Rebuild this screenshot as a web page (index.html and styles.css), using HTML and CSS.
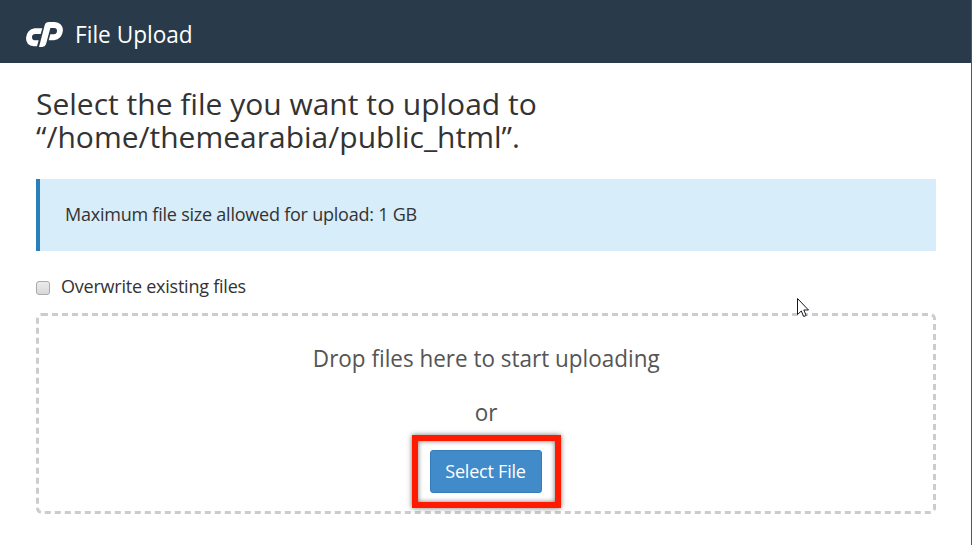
FILE: index.html
```html
<!DOCTYPE html>
<html lang="en">
<head>
<meta charset="utf-8">
<title>File Upload</title>
<link rel="stylesheet" href="styles.css">
</head>
<body>
<header class="topbar">
  <svg class="logo" viewBox="0 0 111 75" aria-hidden="true">
    <path d="M26 19H49L44 36H27Q18 37 18 45Q18 54 25 55H38L33 73H23Q0 71 0 48Q3 22 26 19Z"/>
    <path d="M39 75L56 10Q59 0 69 0H86Q110 2 111 25Q108 53 84 55H68L73 37H84Q93 36 93 27Q93 18 85 18H73L60 67Q57 75 49 75Z"/>
  </svg>
  <span class="brand">File Upload</span>
</header>
<main class="content">
  <h1 class="title">Select the file you want to upload to<br>“/home/themearabia/public_html”.</h1>
  <div class="callout">Maximum file size allowed for upload: 1 GB</div>
  <label class="option"><input class="check" type="checkbox"><span>Overwrite existing files</span></label>
  <section class="dropzone">
    <svg class="outline" viewBox="0 0 900 201" aria-hidden="true"><rect x="1.5" y="1.5" width="897" height="198" rx="4.5"/></svg>
    <p class="hint">Drop files here to start uploading</p>
    <p class="or">or</p>
    <div class="highlight"><button class="select" type="button">Select File</button></div>
  </section>
</main>
<svg class="cursor" viewBox="0 0 13 20" aria-hidden="true"><path d="M.5 .5V16.5L4.3 13L6.7 18.5L9.2 17.5L6.8 12H11.5Z"/></svg>
</body>
</html>
```
FILE: styles.css
```css
* { box-sizing: border-box; }
body {
  margin: 0;
  height: 545px;
  overflow: hidden;
  background: #fff;
  border-right: 1px solid #555;
  color: #333;
  font-family: "Open Sans", sans-serif;
}
.topbar {
  display: flex;
  align-items: center;
  height: 63px;
  padding: 6px 26px 0;
  background: #293a4a;
  color: #fff;
}
.logo { width: 37px; height: 25px; fill: #fff; }
.brand {
  margin: 0 0 2px 12px;
  font-size: 24px;
  line-height: 32px;
  transform: scaleX(.942);
  transform-origin: left;
}
.content { padding: 24px 35px 0 36px; }
.title { margin: 0; font-size: 30px; font-weight: 400; line-height: 33px; }
.callout {
  height: 72px;
  margin-top: 26px;
  padding-left: 25px;
  border-left: 4px solid #2980b9;
  background: #d7edf9;
  font-size: 18px;
  letter-spacing: -.23px;
  line-height: 71px;
}
.option { display: flex; align-items: center; height: 26px; margin-top: 22px; font-size: 18px; letter-spacing: -.23px; }
.check {
  appearance: none;
  width: 14px;
  height: 14px;
  margin: 4px 11px 0 0;
  border: 1px solid #aaa;
  border-radius: 3px;
  background: linear-gradient(#ececec, #d8d8d8);
}
.dropzone {
  position: relative;
  display: flex;
  flex-direction: column;
  align-items: center;
  height: 201px;
  margin-top: 14px;
  color: #555;
}
.outline { position: absolute; inset: 0; width: 900px; height: 201px; fill: none; stroke: #ccc; stroke-width: 3; stroke-dasharray: 6 4; }
.hint, .or { margin: 0; font-size: 24px; line-height: 34px; transform: scaleX(.936); }
.hint { margin-top: 28px; }
.or { margin-top: 20px; }
.highlight {
  position: relative;
  width: 149px;
  height: 73px;
  margin-top: 6px;
  padding: 9px 12px;
  border: 6px solid #ff1a00;
  box-shadow: 0 0 5px rgba(0,0,0,.55), inset 0 0 5px rgba(0,0,0,.55);
}
.select {
  display: block;
  width: 112px;
  height: 43px;
  padding: 0;
  border: 1px solid #357ebd;
  border-radius: 3px;
  background: #428bca;
  color: #fff;
  font: 18px/39px "Open Sans", sans-serif;
  letter-spacing: -.22px;
}
.cursor { position: absolute; left: 797px; top: 298px; width: 13px; height: 20px; fill: #fff; stroke: #171722; }
```
